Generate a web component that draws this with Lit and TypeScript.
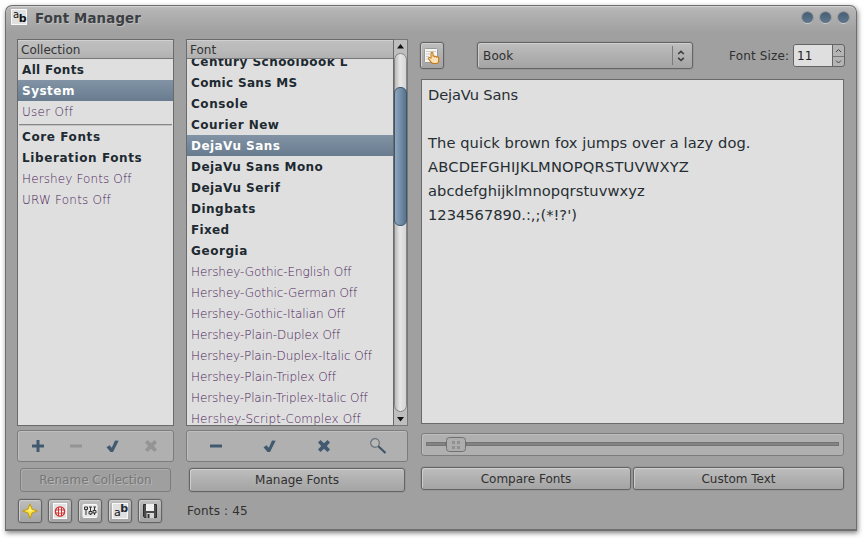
import { LitElement, html, css, svg, nothing } from "lit";
import { customElement, property } from "lit/decorators.js";
import { classMap } from "lit/directives/class-map.js";
import { styleMap } from "lit/directives/style-map.js";

type Row = { name: string; track: number; off?: boolean; selected?: boolean; ruled?: boolean };

const collections: Row[] = [
  { name: "All Fonts", track: 0.35 },
  { name: "System", track: 0.5, selected: true },
  { name: "User Off", track: 0.28, off: true, ruled: true },
  { name: "Core Fonts", track: 0.6 },
  { name: "Liberation Fonts", track: 0.6 },
  { name: "Hershey Fonts Off", track: 0.12, off: true },
  { name: "URW Fonts Off", track: 0.2, off: true },
];

const families: Row[] = [
  { name: "Century Schoolbook L", track: 0.47 },
  { name: "Comic Sans MS", track: 0.33 },
  { name: "Console", track: 0.55 },
  { name: "Courier New", track: 0.48 },
  { name: "DejaVu Sans", track: 0.45, selected: true },
  { name: "DejaVu Sans Mono", track: 0.42 },
  { name: "DejaVu Serif", track: 0.45 },
  { name: "Dingbats", track: 0.5 },
  { name: "Fixed", track: 0.3 },
  { name: "Georgia", track: 0.57 },
  { name: "Hershey-Gothic-English Off", track: -0.06, off: true },
  { name: "Hershey-Gothic-German Off", track: -0.06, off: true },
  { name: "Hershey-Gothic-Italian Off", track: -0.1, off: true },
  { name: "Hershey-Plain-Duplex Off", track: -0.07, off: true },
  { name: "Hershey-Plain-Duplex-Italic Off", track: -0.1, off: true },
  { name: "Hershey-Plain-Triplex Off", track: -0.07, off: true },
  { name: "Hershey-Plain-Triplex-Italic Off", track: -0.1, off: true },
  { name: "Hershey-Script-Complex Off", track: 0.1, off: true },
];

const sample = [
  { text: "DejaVu Sans", track: -0.15 },
  { text: "", track: 0 },
  { text: "The quick brown fox jumps over a lazy dog.", track: 0.08 },
  { text: "ABCDEFGHIJKLMNOPQRSTUVWXYZ", track: 0.19 },
  { text: "abcdefghijklmnopqrstuvwxyz", track: 0.08 },
  { text: "1234567890.:,;(*!?')", track: 0 },
];

const glyphs: Record<string, unknown> = {
  plus: svg`<path d="M6.500 2h3v4.500H14v3H9.500V14h-3V9.500H2v-3h4.500z" fill="currentColor"/>`,
  minus: svg`<path d="M2 6.500h12v3H2z" fill="currentColor"/>`,
  check: svg`<path d="M1.500 9.300 4.500 7.200l2.300 2.600 3.200-7.300 3.700.3-5.700 11.200H5.500z" fill="currentColor"/>`,
  cross: svg`<path d="M4.500 2 8 5.200 11.500 2 14 4.500 10.800 8l3.200 3.500-2.500 2.500L8 10.800 4.500 14 2 11.500 5.200 8 2 4.500z" fill="currentColor"/>`,
  search: svg`<circle cx="5" cy="5" r="4.300" fill="#b8b8b8" stroke="#697379" stroke-width="1.200"/><path d="M8.300 8.300 15.500 15" stroke="#415569" stroke-width="2.200"/>`,
  star: svg`<path d="M8 .8 10 6 15.300 8 10 10 8 15.300 6 10 .7 8 6 6z" fill="#fbe33c" stroke="#c49a10"/><path d="M8 3.500 8.800 7 11.500 8 8 8.500 4.500 8l2.700-1z" fill="#fff59a"/>`,
  help: svg`<rect x="1.500" y=".5" width="13" height="15" fill="#e2e2e2" stroke="#fafafa"/><circle cx="8" cy="8.500" r="4.600" fill="#f4f4f4" stroke="#d03030" stroke-width="1.300"/><path d="M6.500 4v9M9.500 4v9M3.500 7h9M3.500 10h9" stroke="#d03030" stroke-width="1"/><rect x="7" y="7.500" width="2" height="2" fill="#fff"/>`,
  prefs: svg`<rect x="1" y="1.500" width="14" height="13" rx="1" fill="#e8e8e8" stroke="#fafafa"/><path d="M4 6v6M8.500 4v8M12.500 4v8" stroke="#333"/><path d="M2.500 4h3v2.500h-3zM7 8.500h3V11H7zM11 7.500h3V10h-3z" fill="#ddd" stroke="#333"/><path d="M7 4h3M11.500 4H14" stroke="#333"/>`,
  save: svg`<path d="M1.500 1.500h13v13h-12l-1-1z" fill="#4b4b4b" stroke="#2d2d2d"/><path d="M4 1h8v7H4z" fill="#efefef"/><path d="M4.500 10H12v5H4.500z" fill="#d5d5d5"/><path d="M5.500 11h2v4h-2z" fill="#333"/>`,
  pick: svg`<rect x=".5" y=".5" width="13" height="14" rx="1" fill="#f6f6f2" stroke="#999"/><path d="M2 3.500h10M2 6h4M2 8.500h3M2 11h2" stroke="#ccc"/><path d="M7 10V5.200c0-1.300 2-1.300 2 0V8.500c.3-.8 1.800-.7 1.900.2.500-.6 1.700-.3 1.800.4.700-.5 2-.1 2 .8v3c0 1.500-.9 2.600-2.300 2.600H9.500c-1.300 0-2-.6-2.700-1.600L4.700 11c-.5-1 .5-1.900 1.400-1.300z" fill="#fce1b4" stroke="#c4781a" stroke-width="1.100"/>`,
  spin: svg`<path d="m5.200 6 2.800-2.700L10.800 6M5.200 9.800 8 12.500l2.800-2.700" fill="none" stroke="#3c3c3c" stroke-width="1.600"/>`,
};

@customElement("fm-icon")
class FmIcon extends LitElement {
  @property() name = "";
  static styles = css`
    :host { display: block; width: 16px; height: 16px; flex: none; }
    svg { display: block; }
    .ab {
      display: flex; box-sizing: border-box; width: 16px; height: 16px; padding-left: 1px;
      border: 1px solid #f8f8f8; background: #e0e0e0; color: #111;
      font: 10px/10px "DejaVu Sans", sans-serif;
    }
    .ab b { font-size: 11px; line-height: 17px; margin-left: -0.5px; }
    .low { line-height: 17px; font-size: 11px; }
    .ab b.high { line-height: 10px; color: #1f2a35; }
  `;
  render() {
    if (this.name === "ab") return html`<div class="ab"><span>a</span><b>b</b></div>`;
    if (this.name === "ab-low") return html`<div class="ab"><span class="low">a</span><b class="high">b</b></div>`;
    return html`<svg width="16" height="16" viewBox="0 0 16 16">${glyphs[this.name] ?? nothing}</svg>`;
  }
}

@customElement("fm-list")
class FmList extends LitElement {
  @property() heading = "";
  @property({ attribute: false }) rows: Row[] = [];
  static styles = css`
    :host {
      display: flex; flex-direction: column; box-sizing: border-box; min-width: 0; height: 387px;
      border: 1px solid #6a6a6a; background: #dfdfdf; overflow: hidden;
      font: 12px "DejaVu Sans", sans-serif;
    }
    .head {
      flex: none; height: 19px; box-sizing: border-box; padding-left: 3px; line-height: 20px;
      border-bottom: 1px solid #777; color: #333;
      background: linear-gradient(#d0d0d0 0 1px, #bfbfbf 1px, #b9b9b9 60%, #b1b1b1);
    }
    .view { flex: 1; min-height: 0; overflow: hidden; display: flex; flex-direction: column; }
    :host([scrolled]) .view { justify-content: flex-end; }
    :host([scrolled]) .rows { margin-bottom: -4px; }
    .row {
      height: 21px; line-height: 21px; padding-left: 4px; white-space: pre;
      font-weight: bold; color: #1d2a31;
    }
    .row span { display: block; height: 21px; line-height: 22px; }
    .off { font-weight: 200; color: #4a1a58; }
    .selected { color: #fff; background: linear-gradient(#8193a5, #697c8f); }
    .ruled { height: 25px; }
    .ruled::after { content: ""; display: block; height: 1px; margin: 2px 1px 0 -3px; background: #868686; box-shadow: 0 1px #c4c4c4; }
  `;
  render() {
    return html`<div class="head">${this.heading}</div>
      <div class="view"><div class="rows">
        ${this.rows.map((r) => html`<div
          class=${classMap({ row: true, off: !!r.off, selected: !!r.selected, ruled: !!r.ruled })}
          style=${styleMap({ letterSpacing: `${r.track}px` })}><span>${r.name}</span></div>`)}
      </div></div>`;
  }
}

@customElement("app-root")
class AppRoot extends LitElement {
  static styles = css`
    :host {
      display: block; box-sizing: border-box; width: 866px; height: 540px; padding: 5px 9px 9px 5px;
      background: #fff; overflow: hidden; font: 12px "DejaVu Sans", sans-serif; color: #303030;
    }
    * { box-sizing: border-box; }
    .window {
      height: 526px; border: 1px solid #6f6f6f; border-bottom-width: 2px; border-radius: 7px 7px 0 0;
      background: linear-gradient(#c2c2c2 0, #b5b5b5 3px, #a0a0a0 27px);
      box-shadow: 1px 2px 5px rgba(0, 0, 0, 0.5), inset 0 1px #d2d2d2;
    }
    .title { display: flex; align-items: center; height: 33px; padding: 0 7px 11px 5px; }
    .title h1 {
      flex: 1; margin: 3px 0 0 8px; font-size: 13.33px; line-height: 20px; color: #3c4044;
      letter-spacing: 0.16px; text-shadow: 1px 1px #bdbdbd;
    }
    .dots { display: flex; gap: 7px; }
    .dots i {
      width: 11px; height: 11px; border-radius: 50%;
      background: linear-gradient(#465d73, #5f788e); box-shadow: 0 1px #ccc, 0 0 0 1px #999;
    }
    .main { display: grid; grid-template-columns: 157px 222px 424px; column-gap: 12px; padding-left: 11px; }
    .main > section:last-child { margin-left: 1px; width: 423px; }
    .scrolled { display: flex; }
    .scrolled fm-list { width: 208px; }
    .bar {
      width: 14px; display: flex; flex-direction: column; align-items: center;
      border: 1px solid #777; border-left: 0; background: #bebebe;
    }
    .bar svg { display: block; flex: none; }
    .trough {
      flex: 1; width: 13px; border: 1px solid #858585; border-radius: 7px; padding-top: 33px;
      background: linear-gradient(90deg, #bbb, #e6e6e6 45%, #d5d5d5);
    }
    .thumb {
      height: 139px; margin: 0 -1px; border: 1px solid #3c566e; border-radius: 6px;
      background: linear-gradient(90deg, #90a6bb, #7690aa 45%, #58738d);
    }
    .tools {
      display: flex; align-items: center; justify-content: space-between; height: 32px; margin-top: 4px;
      border: 1px solid #7c7c7c; border-radius: 3px; background: #b0b0b0; color: #425a70;
      box-shadow: inset 1px 1px #bebebe; padding: 0 14px 0 12px;
    }
    .tools.wide { padding: 0 21px; }
    .tools .dim { color: #949494; }
    .button {
      display: flex; align-items: center; justify-content: center; height: 24px;
      border: 1px solid #646464; border-radius: 3px; background: linear-gradient(#bebebe, #b0b0b0 50%, #a4a4a4);
      box-shadow: inset 1px 1px #cecece, 0 0 0 1px rgba(0, 0, 0, 0.06);
    }
    .rename { margin: 6px 3px 0; color: #777; background: #9f9f9f; border-color: #7d7d7d; text-shadow: 1px 1px #b8b8b8; box-shadow: inset 1px 1px #adadad; }
    .manage { margin: 6px 3px 0; }
    .square { width: 24px; height: 24px; }
    .icons { display: flex; gap: 6px; margin-top: 7px; padding-left: 1px; }
    .count { margin-top: 12px; line-height: 15px; padding-left: 1px; letter-spacing: 0.15px; }
    .top { display: flex; align-items: center; height: 33px; }
    .pick { flex: none; width: 24px; height: 27px; margin-left: -1px; }
    .combo { flex: none; width: 216px; margin-left: 33px; height: 27px; justify-content: flex-start; padding-left: 5px; }
    .combo span { flex: 1; letter-spacing: 0.15px; }
    .combo fm-icon { border-left: 1px solid #7a7a7a; height: 19px; padding-top: 2px; width: 20px; }
    .size { flex: none; margin-left: 36px; width: 64px; white-space: nowrap; letter-spacing: 0.17px; }
    .entry { display: flex; flex: none; width: 52px; height: 23px; border: 1px solid #646464; border-radius: 3px; background: #b4b4b4; }
    .entry span { flex: 1; padding-left: 3px; line-height: 22px; background: #dfdfdf; border-right: 1px solid #646464; border-radius: 2px 0 0 2px; color: #222; }
    .steps { width: 11px; }
    .preview {
      height: 345px; margin-top: 7px; padding: 3px 6px; border: 1px solid #6a6a6a; background: #dfdfdf;
      font-size: 14.67px; line-height: 24px; color: #262e33; white-space: pre;
    }
    .preview div { height: 24px; }
    .slider {
      display: flex; align-items: center; height: 23px; margin-top: 9px; padding: 0 4px;
      border: 1px solid #7c7c7c; border-radius: 3px; background: #b0b0b0; box-shadow: inset 1px 1px #bebebe;
    }
    .slider i { height: 4px; margin-bottom: 1px; background: #838383; border: 1px solid #747474; }
    .slider .rest { flex: 1; }
    .slider .lead { width: 20px; }
    .slider svg { flex: none; }
    .pair { display: grid; grid-template-columns: 210px 211px; gap: 2px; margin-top: 11px; }
    .pair .button { height: 23px; }
  `;

  tool(name: string, dim = false) {
    return html`<fm-icon class=${classMap({ dim })} name=${name}></fm-icon>`;
  }

  render() {
    return html`<div class="window">
      <header class="title"><fm-icon name="ab"></fm-icon><h1>Font Manager</h1><div class="dots"><i></i><i></i><i></i></div></header>
      <div class="main">
        <section>
          <fm-list heading="Collection" .rows=${collections}></fm-list>
          <div class="tools">${this.tool("plus")}${this.tool("minus", true)}${this.tool("check")}${this.tool("cross", true)}</div>
          <div class="button rename">Rename Collection</div>
          <div class="icons">
            ${["star", "help", "prefs", "ab-low", "save"].map((n) => html`<div class="button square"><fm-icon name=${n}></fm-icon></div>`)}
          </div>
        </section>
        <section>
          <div class="scrolled">
            <fm-list scrolled heading="Font" .rows=${families}></fm-list>
            <div class="bar">
              <svg width="13" height="13"><path d="M3 8.500h7L6.500 4z" fill="#111"/></svg>
              <div class="trough"><div class="thumb"></div></div>
              <svg width="13" height="13"><path d="M3 5h7L6.500 9.500z" fill="#111"/></svg>
            </div>
          </div>
          <div class="tools wide">${this.tool("minus")}${this.tool("check")}${this.tool("cross")}${this.tool("search")}</div>
          <div class="button manage">Manage Fonts</div>
          <div class="count">Fonts : 45</div>
        </section>
        <section>
          <div class="top">
            <div class="button pick"><fm-icon name="pick"></fm-icon></div>
            <div class="button combo"><span>Book</span><fm-icon name="spin"></fm-icon></div>
            <div class="size">Font Size:</div>
            <div class="entry"><span>11</span><svg class="steps" width="11" height="21"><path d="M0 11.500h11" stroke="#777"/><path d="m3 7 2.500-2.500L8 7M3 15.500 5.500 18 8 15.500" fill="none" stroke="#444"/></svg></div>
          </div>
          <div class="preview">${sample.map((s) => html`<div style=${styleMap({ letterSpacing: `${s.track}px` })}>${s.text}</div>`)}</div>
          <div class="slider"><i class="lead"></i><svg width="20" height="15"><rect x=".5" y=".5" width="19" height="14" rx="3" fill="#adadad" stroke="#707070"/><path d="M6 4h3v3H6zM11 4h3v3h-3zM6 9h3v3H6zM11 9h3v3h-3z" fill="#919191"/></svg><i class="rest"></i></div>
          <div class="pair"><div class="button">Compare Fonts</div><div class="button">Custom Text</div></div>
        </section>
      </div>
    </div>`;
  }
}
